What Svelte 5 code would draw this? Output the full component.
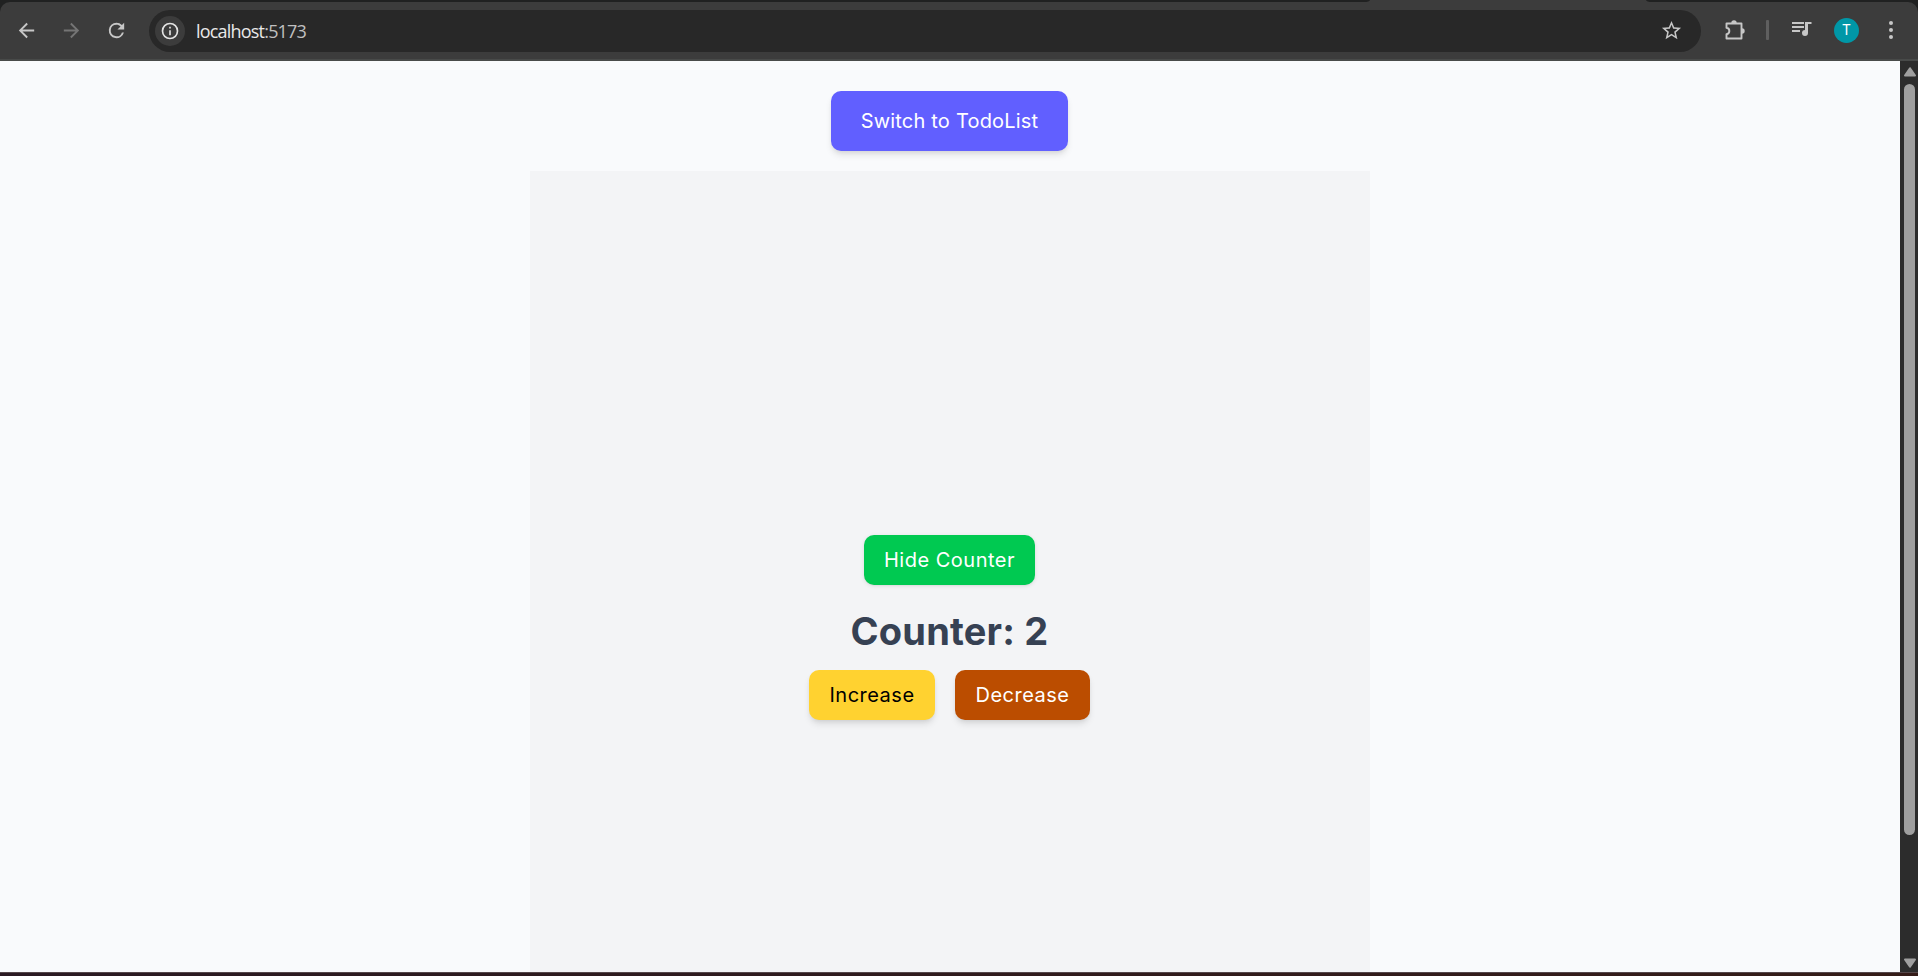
<script>
  let count = $state(2);
  let visible = $state(true);
</script>

<div class="window">
  <div class="tabstrip"><span class="strip left"></span><span class="strip right"></span></div>
  <header class="toolbar">
    <svg class="nav" viewBox="0 0 24 24"><path d="M20 11H7.8l5.6-5.6L12 4l-8 8 8 8 1.4-1.4L7.8 13H20z" /></svg>
    <svg class="nav dim" viewBox="0 0 24 24"><path d="M4 11h12.2l-5.6-5.6L12 4l8 8-8 8-1.4-1.4 5.6-5.6H4z" /></svg>
    <svg class="nav" viewBox="0 0 24 24"><path d="M17.65 6.35A7.96 7.96 0 0 0 12 4a8 8 0 1 0 7.73 10h-2.08A6 6 0 1 1 12 6c1.66 0 3.14.69 4.22 1.78L13 11h7V4z" /></svg>
    <div class="address">
      <span class="info">
        <svg viewBox="0 0 24 24"><path d="M11 7h2v2h-2zm0 4h2v6h-2zm1-9a10 10 0 1 0 0 20 10 10 0 0 0 0-20zm0 18a8 8 0 1 1 0-16 8 8 0 0 1 0 16z" /></svg>
      </span>
      <span class="url">localhost<span class="port">:5173</span></span>
      <svg class="star" viewBox="0 0 24 24"><path d="M22 9.24l-7.19-.62L12 2 9.19 8.63 2 9.24l5.46 4.73L5.82 21 12 17.27 18.18 21l-1.63-7.03zM12 15.4l-3.76 2.27 1-4.28-3.32-2.88 4.38-.38L12 6.1l1.71 4.04 4.38.38-3.32 2.88 1 4.28z" /></svg>
    </div>
    <svg class="puzzle" viewBox="0 0 24 24"><path d="M3.5 5.5H18.5V20.5H3.5V16.2C7.3 15.6 7.3 10.4 3.5 9.8Z" fill="none" stroke="currentColor" stroke-width="1.9" stroke-linejoin="round" /><path d="M8.3 5a2.7 2.7 0 0 1 5.4 0zM19 10.3a2.7 2.7 0 0 1 0 5.4z" /></svg>
    <span class="divider"></span>
    <svg class="queue" viewBox="0 0 20 16"><path d="M0 0h12v2H0zM0 4h12v2H0zM0 8h8v2H0zM13 0h6.5v2H16v9a3 3 0 1 1-3-3z" /></svg>
    <span class="avatar">T</span>
    <svg class="more" viewBox="0 0 6 20"><circle cx="3" cy="3" r="2" /><circle cx="3" cy="10" r="2" /><circle cx="3" cy="17" r="2" /></svg>
  </header>

  <div class="viewport">
    <main>
      <button class="switch"><span>Switch to TodoList</span></button>
      <section>
        <button class="toggle" onclick={() => (visible = !visible)}><span>{visible ? 'Hide' : 'Show'} Counter</span></button>
        {#if visible}
          <h1>Counter: {count}</h1>
          <div class="actions">
            <button class="increase" onclick={() => count++}><span>Increase</span></button>
            <button class="decrease" onclick={() => count--}><span>Decrease</span></button>
          </div>
        {/if}
      </section>
    </main>
    <aside class="scrollbar">
      <svg viewBox="0 0 12 10"><path d="M6 1.2L11 8.5H1z" stroke="currentColor" stroke-width="2" stroke-linejoin="round" /></svg>
      <span class="thumb"></span>
      <svg class="down" viewBox="0 0 12 10"><path d="M6 8.8L11 1.5H1z" stroke="currentColor" stroke-width="2" stroke-linejoin="round" /></svg>
    </aside>
  </div>
  <footer></footer>
</div>

<style>
  :global(body) { margin: 0; overflow: hidden; }
  * { box-sizing: border-box; }
  .window { width: 1918px; height: 976px; display: flex; flex-direction: column; overflow: hidden; background: #202121; }
  .tabstrip { height: 2px; flex: none; display: flex; justify-content: space-between; background: #3c3c3c; }
  .strip { height: 2px; background: #202121; }
  .left { width: 1370px; border-bottom-right-radius: 6px 2px; }
  .right { width: 272px; border-bottom-left-radius: 6px 2px; }
  .toolbar { height: 59px; flex: none; display: flex; align-items: center; padding: 0 0 1px 15px; background: #3c3c3c; border-bottom: 2px solid #484a49; border-radius: 10px 10px 0 0; color: #c7c7c7; }
  svg { display: block; flex: none; fill: currentColor; overflow: visible; }
  .nav { width: 23px; height: 23px; margin-right: 22px; }
  .dim { color: #757575; }
  .address { width: 1552px; height: 42px; margin: 1px 22px 0 -1px; padding: 0 18px 0 6px; display: flex; align-items: center; border-radius: 21px; background: #282828; }
  .info { width: 30px; height: 30px; margin-right: 11px; display: grid; place-items: center; border-radius: 50%; background: #3c3c3c; color: #e3e3e3; }
  .info svg { width: 20px; height: 20px; }
  .url { flex: 1; font: 18px/24px "Open Sans", sans-serif; letter-spacing: -0.8px; color: #e8e8e8; }
  .port { color: #c0c0c0; }
  .star { width: 23px; height: 23px; }
  .puzzle { width: 24px; height: 24px; margin-right: 19px; }
  .divider { width: 3px; height: 20px; margin-right: 23px; border-radius: 1px; background: #5f5f5f; }
  .queue { width: 20px; height: 16px; margin-right: 22px; }
  .avatar { width: 25px; height: 25px; margin-right: 29px; border-radius: 50%; background: #0097a7; color: #fff; font: 14px/25px Roboto, sans-serif; text-align: center; }
  .more { width: 6px; height: 20px; }
  .viewport { flex: 1; min-height: 0; display: flex; }
  main { width: 1900px; padding: 21px 1px 0 0; padding-top: 30px; display: flex; flex-direction: column; align-items: center; background: #f9fafc; font-family: Inter, "Liberation Sans", sans-serif; }
  button { display: flex; align-items: center; justify-content: center; flex: none; padding: 0; border: 0; border-radius: 10px; color: #fff; font: 400 20px/30px Inter, "Liberation Sans", sans-serif; letter-spacing: 0.5px; box-shadow: 0 5px 7px -1px #0000001a, 0 2px 5px -2px #0000001a; white-space: nowrap; }
  .switch { width: 237px; height: 60px; background: #615fff; letter-spacing: 0.2px; }
  section { width: 840px; flex: 1; margin-top: 20px; display: flex; flex-direction: column; align-items: center; padding-top: 364px; background: #f3f4f6; }
  .toggle { width: 171px; height: 50px; background: #00c951; box-shadow: 0 1px 4px #0000001a, 0 1px 2px -1px #0000001a; }
  h1 { margin: 21px 0 14px; color: #364153; font-size: 38px; line-height: 50px; font-weight: 700; letter-spacing: 0.2px; white-space: nowrap; }
  .actions { display: flex; gap: 20px; }
  .increase { width: 126px; height: 50px; background: #ffd230; color: #000; }
  .decrease { width: 135px; height: 50px; background: #bb4d00; }
  .scrollbar { width: 18px; display: flex; flex-direction: column; align-items: center; padding: 6px 0 4px 1px; background: #2c2c2c; color: #9f9f9f; }
  .scrollbar svg { width: 12px; height: 10px; }
  .thumb { width: 11px; height: 751px; margin-top: 7px; border-radius: 6px; background: #9f9f9f; }
  .down { margin-top: auto; }
  footer { height: 4px; flex: none; border-top: 1px solid #55474a; background: linear-gradient(90deg, #2a1a22, #351c18); }
</style>
